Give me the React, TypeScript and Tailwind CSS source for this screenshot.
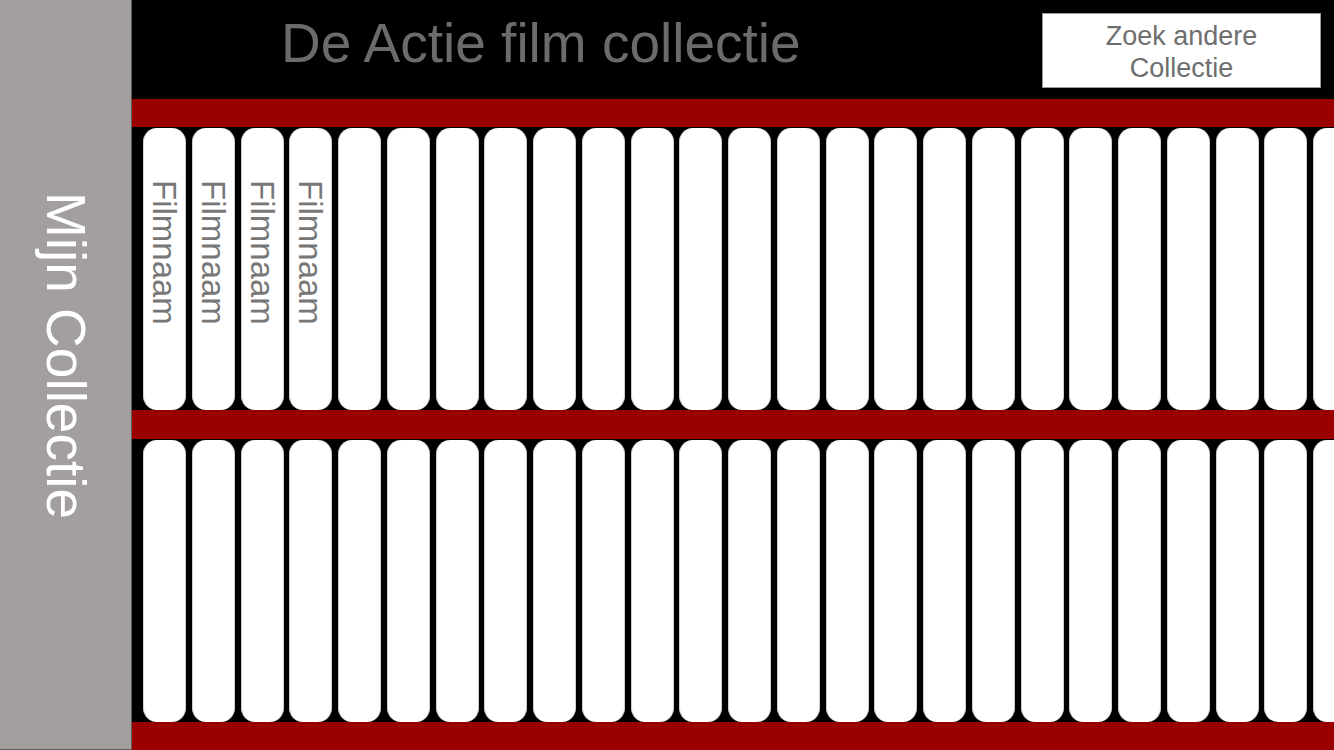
const names = ["Filmnaam", "Filmnaam", "Filmnaam", "Filmnaam"];
const slots = Array.from({ length: 25 }, (_, i) => i);

function Shelf({ labels }: { labels: string[] }) {
  return (
    <div className="h-[283px] shrink-0 flex gap-[5.75px] pl-[11px] pt-[1px]">
      {slots.map((i) => (
        <div
          key={i}
          className="w-[43px] shrink-0 rounded-[14px] bg-white border-x border-[#cfcfcf] flex justify-center pt-[52px]"
        >
          {labels[i] && (
            <span className="[writing-mode:vertical-rl] text-[33px] leading-none text-[#777777]">
              {labels[i]}
            </span>
          )}
        </div>
      ))}
    </div>
  );
}

export default function App() {
  return (
    <div className="flex h-[750px] w-[1334px] overflow-hidden font-['Liberation_Sans',Arial,sans-serif]">
      {/* SIDEBAR */}
      <aside className="w-[132px] shrink-0 bg-[#a39f9e] border-r border-b border-[#5e5e5e] flex justify-center pt-[192px]">
        <span className="[writing-mode:vertical-rl] text-[55px] leading-none text-white h-fit">
          Mijn Collectie
        </span>
      </aside>

      {/* MAIN */}
      <main className="flex-1 min-w-0 flex flex-col bg-black">
        <header className="h-[99px] shrink-0 flex items-start justify-between pl-[149px] pr-[13px]">
          <h1 className="mt-[16px] text-[55px] leading-none text-[#6b6b6b]">
            De Actie film collectie
          </h1>
          <button className="mt-[13px] w-[279px] h-[75px] bg-white border border-[#9a9a9a] flex flex-col items-center justify-center pt-[2px] text-[27px] leading-[32px] text-[#6e6e6e]">
            <span>Zoek andere</span>
            <span>Collectie</span>
          </button>
        </header>

        <div className="h-[28px] shrink-0 bg-[#9b0000]" />
        <Shelf labels={names} />
        <div className="h-[29px] shrink-0 bg-[#9b0000]" />
        <Shelf labels={[]} />
        <div className="h-[28px] shrink-0 bg-[#9b0000]" />
      </main>
    </div>
  );
}
